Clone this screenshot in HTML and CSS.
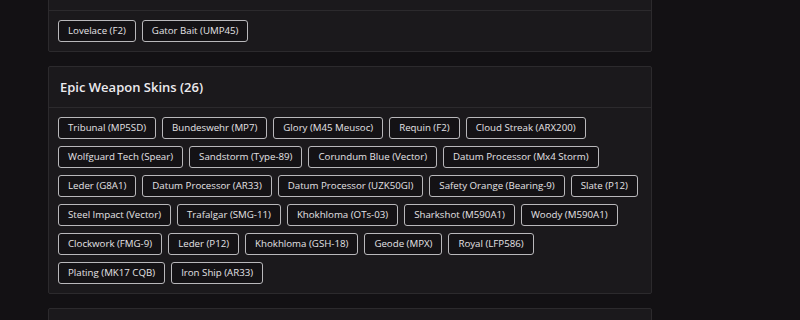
FILE: index.html
```html
<!DOCTYPE html>
<html lang="en">
<head>
    <meta charset="UTF-8">
    <meta name="viewport" content="width=device-width, initial-scale=1.0">
    <title>Weapon Skins</title>
    <link rel="stylesheet" href="styles.css">
</head>
<body>
<div class="container">
    <!-- Legendary -->
    <div class="card">
        <div class="card-header">Legendary Weapon Skins (2)</div>
        <div class="card-body">
            <span class="tag">Lovelace (F2)</span>
            <span class="tag">Gator Bait (UMP45)</span>
        </div>
    </div>

    <!-- Epic -->
    <div class="card">
        <div class="card-header">Epic Weapon Skins (26)</div>
        <div class="card-body">
            <span class="tag">Tribunal (MP5SD)</span>
            <span class="tag">Bundeswehr (MP7)</span>
            <span class="tag">Glory (M45 Meusoc)</span>
            <span class="tag">Requin (F2)</span>
            <span class="tag">Cloud Streak (ARX200)</span>
            <span class="tag">Wolfguard Tech (Spear)</span>
            <span class="tag">Sandstorm (Type-89)</span>
            <span class="tag">Corundum Blue (Vector)</span>
            <span class="tag">Datum Processor (Mx4 Storm)</span>
            <span class="tag">Leder (G8A1)</span>
            <span class="tag">Datum Processor (AR33)</span>
            <span class="tag">Datum Processor (UZK50GI)</span>
            <span class="tag">Safety Orange (Bearing-9)</span>
            <span class="tag">Slate (P12)</span>
            <span class="tag">Steel Impact (Vector)</span>
            <span class="tag">Trafalgar (SMG-11)</span>
            <span class="tag">Khokhloma (OTs-03)</span>
            <span class="tag">Sharkshot (M590A1)</span>
            <span class="tag">Woody (M590A1)</span>
            <span class="tag">Clockwork (FMG-9)</span>
            <span class="tag">Leder (P12)</span>
            <span class="tag">Khokhloma (GSH-18)</span>
            <span class="tag">Geode (MPX)</span>
            <span class="tag">Royal (LFP586)</span>
            <span class="tag">Plating (MK17 CQB)</span>
            <span class="tag">Iron Ship (AR33)</span>
        </div>
    </div>

    <!-- Rare -->
    <div class="card">
        <div class="card-header">Rare Weapon Skins</div>
        <div class="card-body"></div>
    </div>
</div>
</body>
</html>
```

FILE: styles.css
```css
body {
    font-family: "Open Sans", "Noto Sans", sans-serif;
    margin: 0;
    padding: 0;
    background-color: #131114;
    color: #e2e0e3;
}
.container {
    width: 604px;
    margin: -31px 0 0 48px;
}
.card {
    background: #1b191c;
    border: 1px solid #2c2a2d;
    border-radius: 2px;
    margin-bottom: 14px;
}
.card-header {
    height: 40px;
    line-height: 40px;
    padding: 0 11px;
    font-size: 13px;
    font-weight: 600;
    color: #ecebee;
    border-bottom: 1px solid #2c2a2d;
}
.card-body {
    display: flex;
    flex-wrap: wrap;
    gap: 7px 6px;
    padding: 9px 9px 9px;
}
.tag {
    display: inline-block;
    height: 20px;
    line-height: 20px;
    padding: 0 9px;
    font-size: 9.7px;
    font-weight: 500;
    color: #e4e3e6;
    background: #141215;
    border: 1px solid #b9b8bb;
    border-radius: 3px;
    white-space: nowrap;
}
```
